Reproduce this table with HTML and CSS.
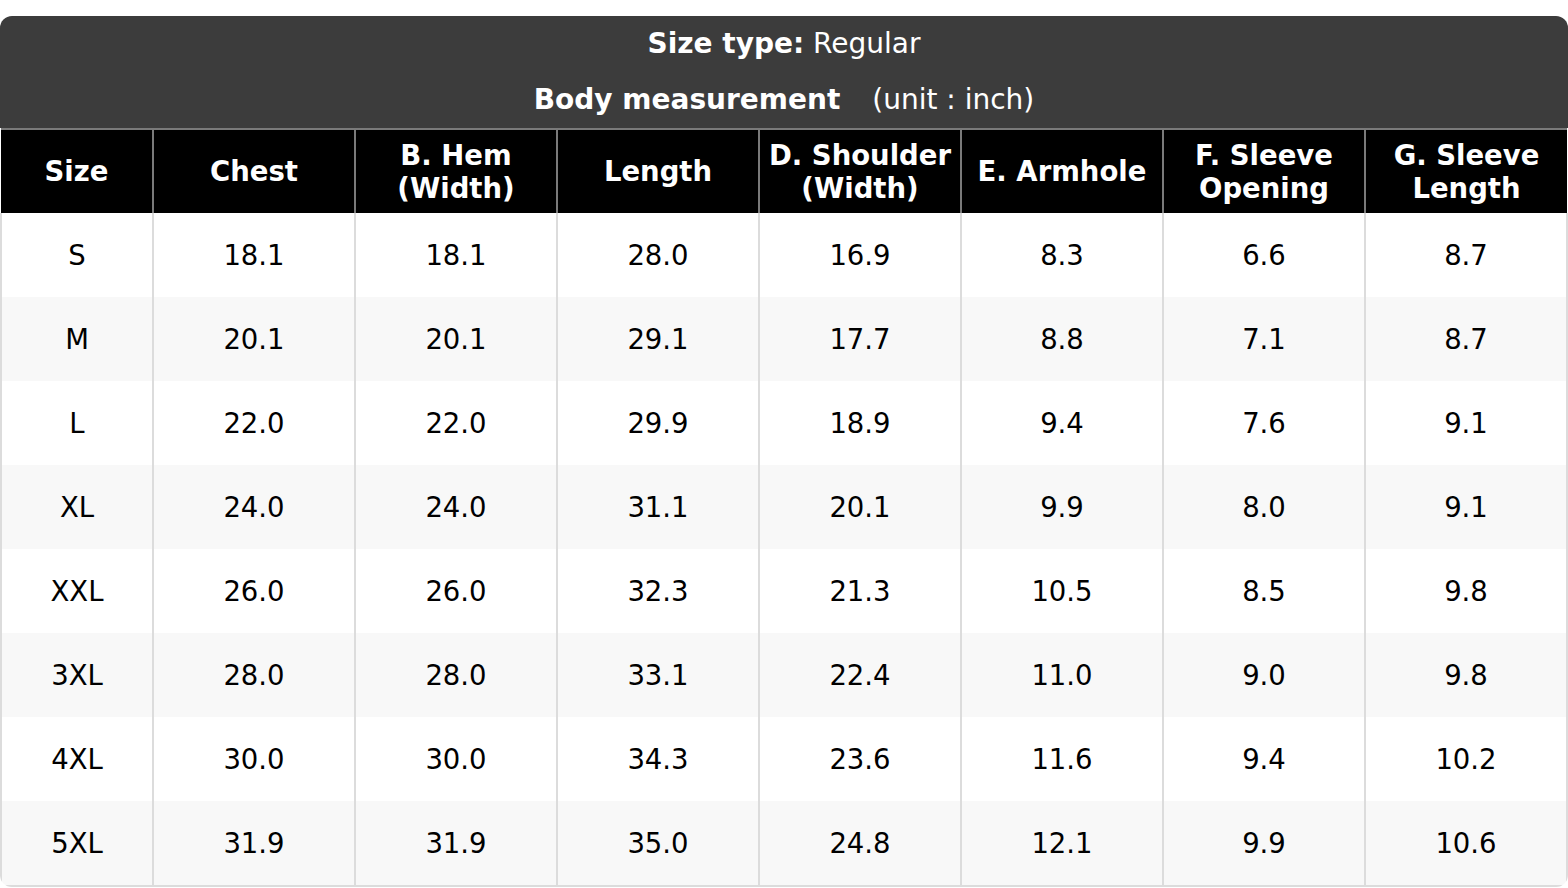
FILE: index.html
```html
<!DOCTYPE html>
<html>
<head>
<meta charset="utf-8">
<link rel="stylesheet" href="styles.css">
</head>
<body>
<div class="sheet">
  <div class="title">
    <div class="title-line"><b>Size type:</b> Regular</div>
    <div class="title-line"><b>Body measurement</b><span class="unit">(unit : inch)</span></div>
  </div>
  <table class="chart">
    <colgroup>
      <col class="c-size"><col class="c"><col class="c"><col class="c"><col class="c"><col class="c"><col class="c"><col class="c">
    </colgroup>
    <thead>
      <tr>
        <th>Size</th><th>Chest</th><th>B. Hem<br>(Width)</th><th>Length</th><th>D. Shoulder<br>(Width)</th><th>E. Armhole</th><th>F. Sleeve<br>Opening</th><th>G. Sleeve<br>Length</th>
      </tr>
    </thead>
    <tbody>
      <tr><td>S</td><td>18.1</td><td>18.1</td><td>28.0</td><td>16.9</td><td>8.3</td><td>6.6</td><td>8.7</td></tr>
      <tr><td>M</td><td>20.1</td><td>20.1</td><td>29.1</td><td>17.7</td><td>8.8</td><td>7.1</td><td>8.7</td></tr>
      <tr><td>L</td><td>22.0</td><td>22.0</td><td>29.9</td><td>18.9</td><td>9.4</td><td>7.6</td><td>9.1</td></tr>
      <tr><td>XL</td><td>24.0</td><td>24.0</td><td>31.1</td><td>20.1</td><td>9.9</td><td>8.0</td><td>9.1</td></tr>
      <tr><td>XXL</td><td>26.0</td><td>26.0</td><td>32.3</td><td>21.3</td><td>10.5</td><td>8.5</td><td>9.8</td></tr>
      <tr><td>3XL</td><td>28.0</td><td>28.0</td><td>33.1</td><td>22.4</td><td>11.0</td><td>9.0</td><td>9.8</td></tr>
      <tr><td>4XL</td><td>30.0</td><td>30.0</td><td>34.3</td><td>23.6</td><td>11.6</td><td>9.4</td><td>10.2</td></tr>
      <tr><td>5XL</td><td>31.9</td><td>31.9</td><td>35.0</td><td>24.8</td><td>12.1</td><td>9.9</td><td>10.6</td></tr>
    </tbody>
  </table>
</div>
</body>
</html>
```

FILE: styles.css
```css
html, body {
  margin: 0;
  padding: 0;
  background: #ffffff;
}

body {
  font-family: "DejaVu Sans", sans-serif;
  padding-top: 16px;
}

.sheet {
  width: 1568px;
  border-radius: 12px;
  overflow: hidden;
  background: #ffffff;
}

.title {
  background: #3c3c3c;
  color: #ffffff;
  font-size: 28px;
  height: 112px;
  display: flex;
  flex-direction: column;
  align-items: center;
  justify-content: center;
  gap: 22px;
}

.title-line {
  line-height: 34px;
}

.unit {
  margin-left: 32px;
}

.chart {
  width: 1568px;
  border-collapse: collapse;
  table-layout: fixed;
  font-size: 27.5px;
}

.c-size { width: 152px; }
.c { width: 202px; }

.chart th {
  background: #000000;
  color: #ffffff;
  font-weight: bold;
  height: 83px;
  padding: 0;
  line-height: 33px;
  border-top: 2px solid #7a7a7a;
  border-left: 2px solid #7a7a7a;
  text-align: center;
  vertical-align: middle;
}

.chart th:first-child {
  border-left: none;
}

.chart td {
  height: 84px;
  padding: 0;
  text-align: center;
  vertical-align: middle;
  color: #000000;
  border-left: 2px solid #dcdcdc;
}

.chart td:first-child {
  border-left: 2px solid #dcdcdc;
}

.chart td:last-child {
  border-right: 2px solid #dcdcdc;
}

.chart tbody tr:nth-child(even) td {
  background: #f8f8f8;
}

.chart tbody tr:last-child td {
  border-bottom: 2px solid #dcdcdc;
}
```
